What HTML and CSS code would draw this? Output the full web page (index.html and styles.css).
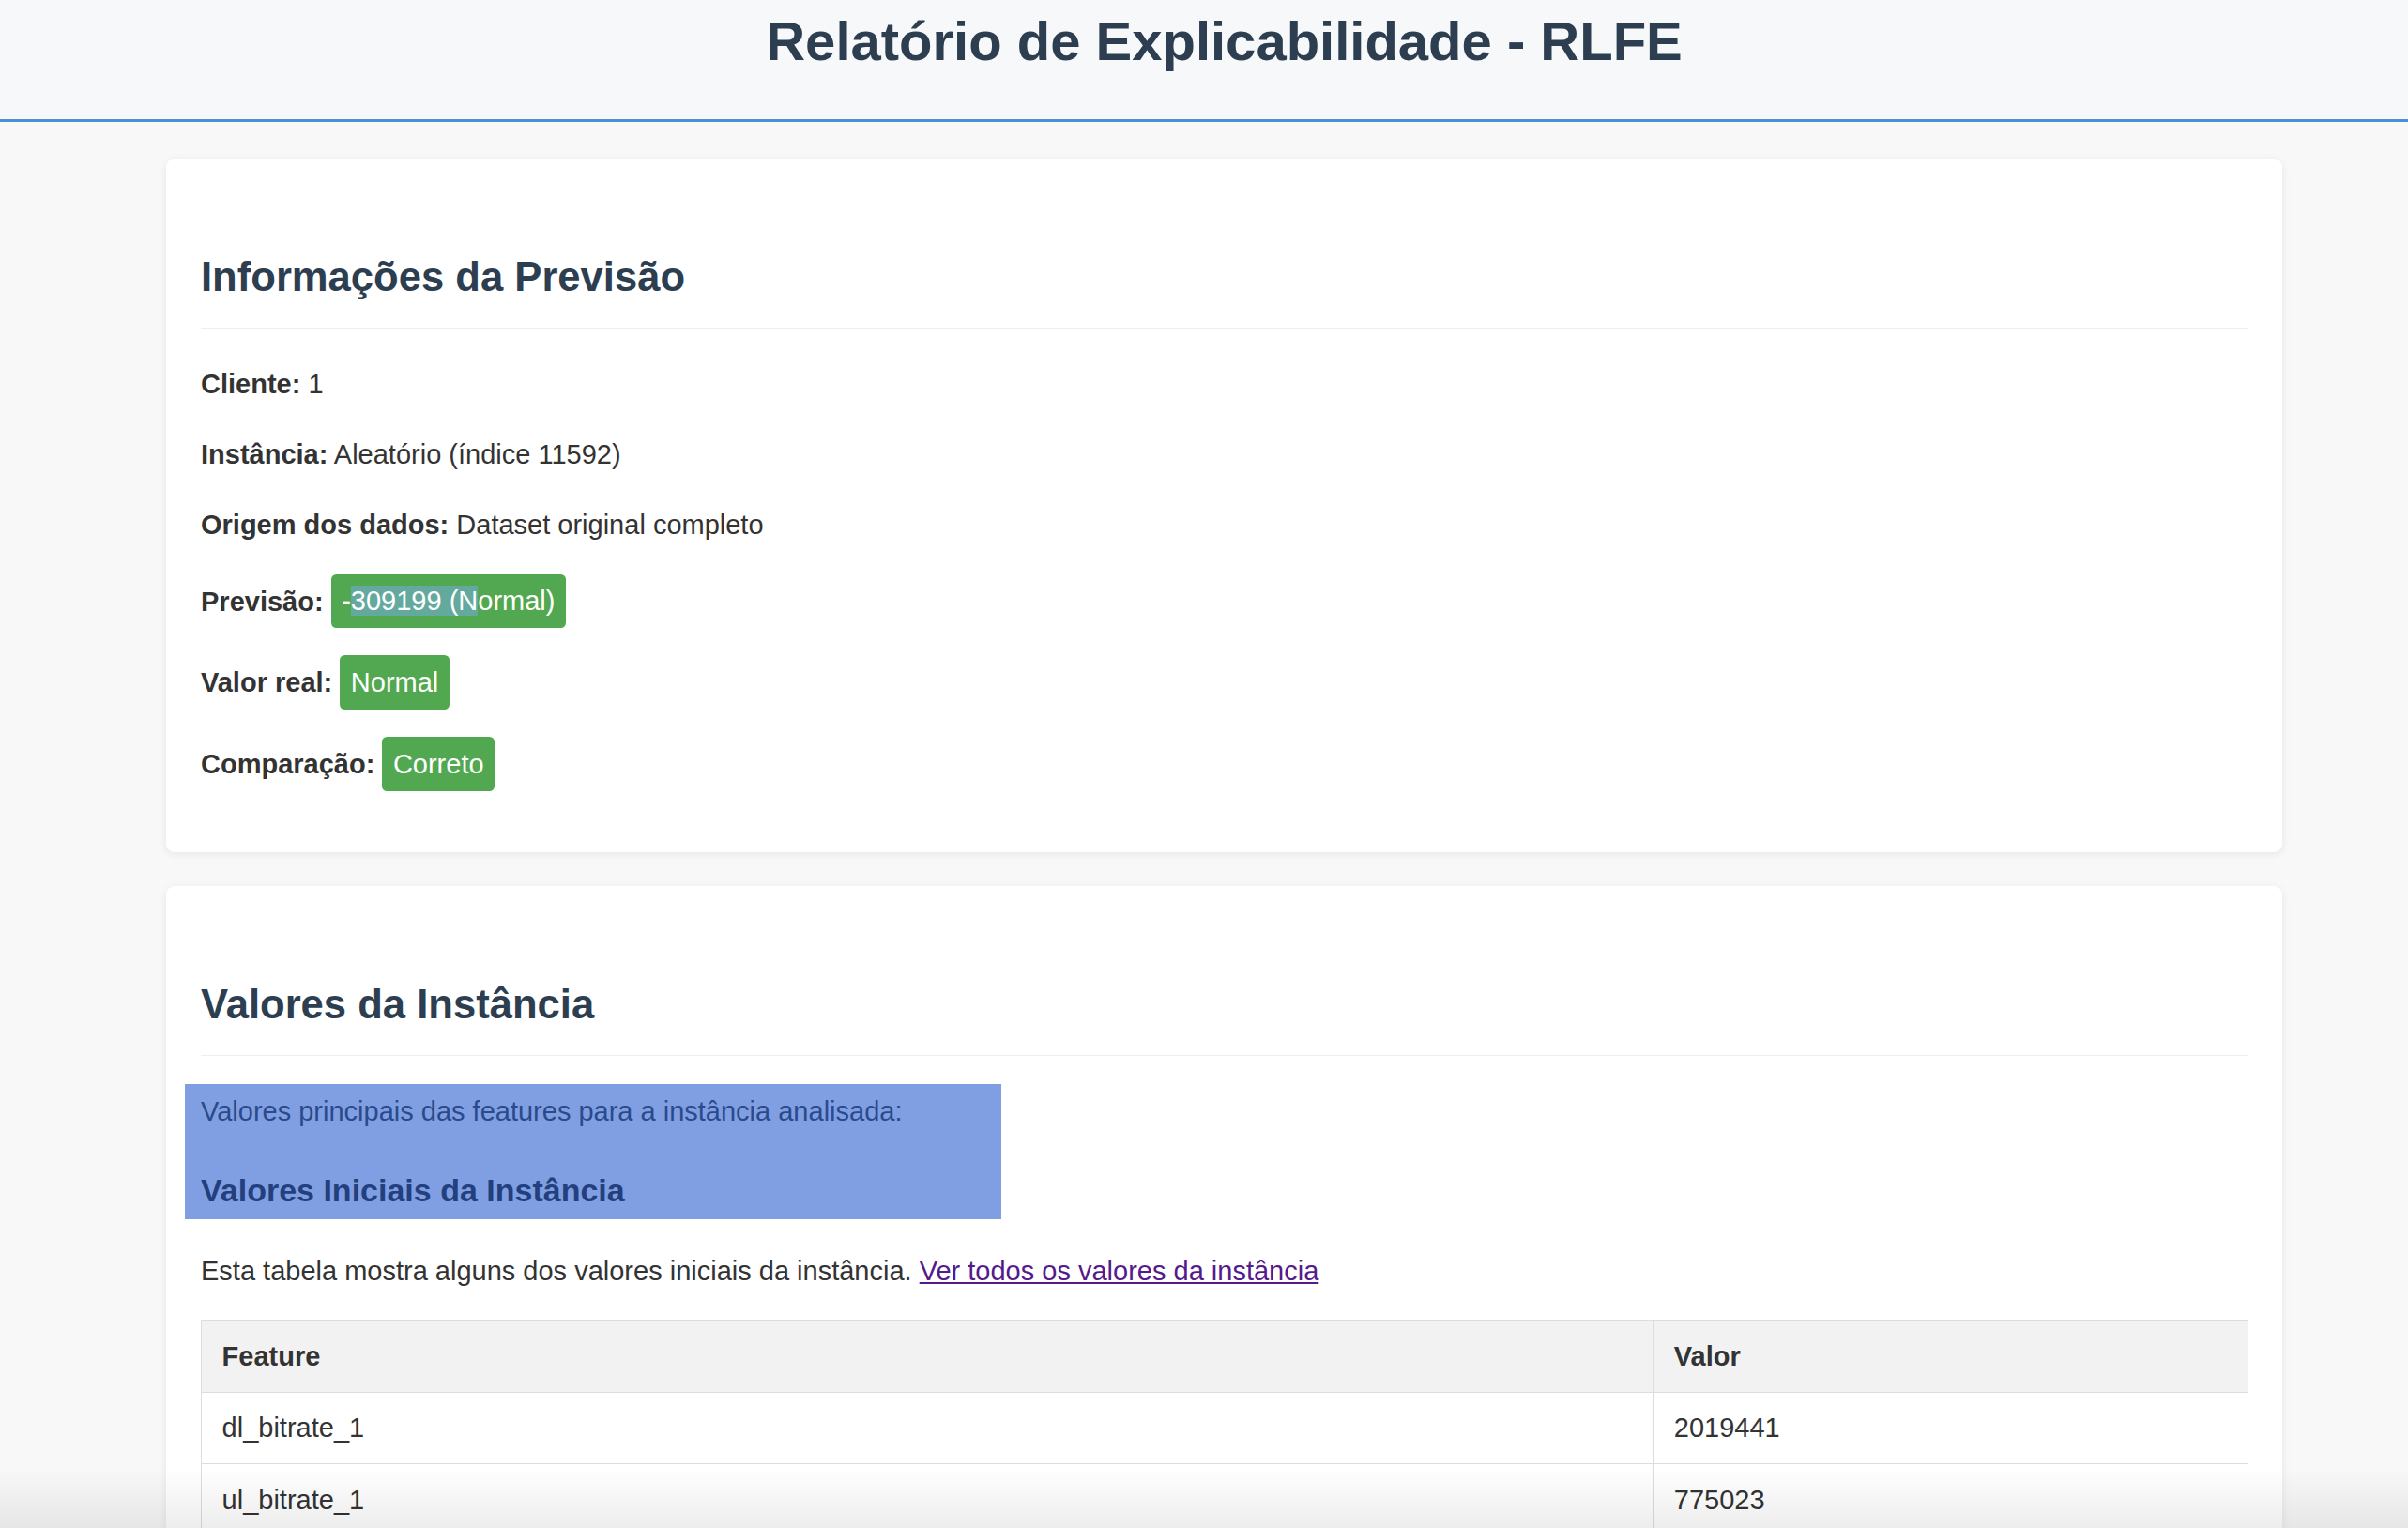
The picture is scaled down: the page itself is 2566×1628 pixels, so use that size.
FILE: index.html
```html
<!DOCTYPE html>
<html lang="pt">
<head>
<meta charset="utf-8">
<title>Relatório de Explicabilidade - RLFE</title>
<link rel="stylesheet" href="styles.css">
</head>
<body>
<header class="header">
  <h1 class="title">Relatório de Explicabilidade - RLFE</h1>
</header>
<main class="container">
  <section class="card card-info">
    <h2 class="section-title">Informações da Previsão</h2>
    <p class="info"><strong>Cliente:</strong> 1</p>
    <p class="info"><strong>Instância:</strong> Aleatório (índice 11592)</p>
    <p class="info"><strong>Origem dos dados:</strong> Dataset original completo</p>
    <p class="info"><strong>Previsão:</strong> <span class="badge">-<span class="badge-sel">309199 (N</span>ormal)</span></p>
    <p class="info"><strong>Valor real:</strong> <span class="badge">Normal</span></p>
    <p class="info"><strong>Comparação:</strong> <span class="badge">Correto</span></p>
  </section>
  <section class="card">
    <h2 class="section-title">Valores da Instância</h2>
    <div class="selection">
      <p class="sel-text">Valores principais das features para a instância analisada:</p>
      <h3 class="sub-title">Valores Iniciais da Instância</h3>
    </div>
    <p class="info">Esta tabela mostra alguns dos valores iniciais da instância. <a class="link" href="#">Ver todos os valores da instância</a></p>
    <table class="data-table">
      <thead>
        <tr><th class="col-feature">Feature</th><th>Valor</th></tr>
      </thead>
      <tbody>
        <tr><td>dl_bitrate_1</td><td>2019441</td></tr>
        <tr><td>ul_bitrate_1</td><td>775023</td></tr>
        <tr><td>dl_retx_1</td><td>0</td></tr>
      </tbody>
    </table>
  </section>
</main>
<div class="fade"></div>
</body>
</html>
```

FILE: styles.css
```css
html, body {
  margin: 0;
  padding: 0;
}

body {
  background: #f8f8f8;
  color: #333333;
  font-family: "Liberation Sans", Arial, sans-serif;
  font-size: 29px;
  line-height: 1.6;
}

.header {
  background: #f6f8fa;
  border-bottom: 3.6px solid #4a90d9;
  padding: 9.4px 0 48.5px 43px;
}

.title {
  margin: 0;
  text-align: center;
  font-size: 58px;
  font-weight: bold;
  line-height: 1.2;
  color: #2c3e50;
}

.container {
  margin: 38.4px 134px 0 177px;
}

.card {
  background: #ffffff;
  border-radius: 9px;
  box-shadow: 0 2px 10px rgba(0, 0, 0, 0.08);
  padding: 36px 36px 36px 37px;
  margin-bottom: 36.3px;
}

.section-title {
  margin: 56px 0 36px;
  padding-bottom: 18px;
  border-bottom: 1.8px solid #eeeeee;
  font-size: 43.6px;
  line-height: 1.6;
  color: #2c3e50;
}

.info {
  margin: 29px 0;
}

.info strong {
  font-weight: bold;
}

.badge {
  display: inline-block;
  padding: 5.6px 11.5px;
  border-radius: 5.4px;
  background: #51a851;
  color: #ffffff;
  line-height: 1.6;
}

.badge-sel {
  background: #63a99e;
}

.selection {
  box-sizing: border-box;
  width: 870px;
  margin: -6px 0 31.4px -17px;
  padding: 6px 17px 4px 17px;
  background: #7f9fe2;
}

.sel-text {
  margin: 0 0 29px;
  color: #2b4a8c;
}

.sub-title {
  margin: 34px 0 0;
  font-size: 34px;
  line-height: 1.6;
  color: #233f7e;
}

.link {
  color: #551a8b;
  text-decoration: underline;
}

.data-table {
  width: 100%;
  border-collapse: collapse;
}

.data-table th,
.data-table td {
  border: 1.8px solid #dddddd;
  padding: 14.6px 21.6px;
  text-align: left;
  font-size: 29px;
  line-height: 1.6;
}

.data-table th {
  background: #f2f2f2;
  font-weight: bold;
}

.col-feature {
  width: 1503px;
}

.fade {
  position: fixed;
  left: 0;
  right: 0;
  bottom: 0;
  height: 64px;
  background: linear-gradient(rgba(0, 0, 0, 0), rgba(0, 0, 0, 0.07));
  pointer-events: none;
}
```
